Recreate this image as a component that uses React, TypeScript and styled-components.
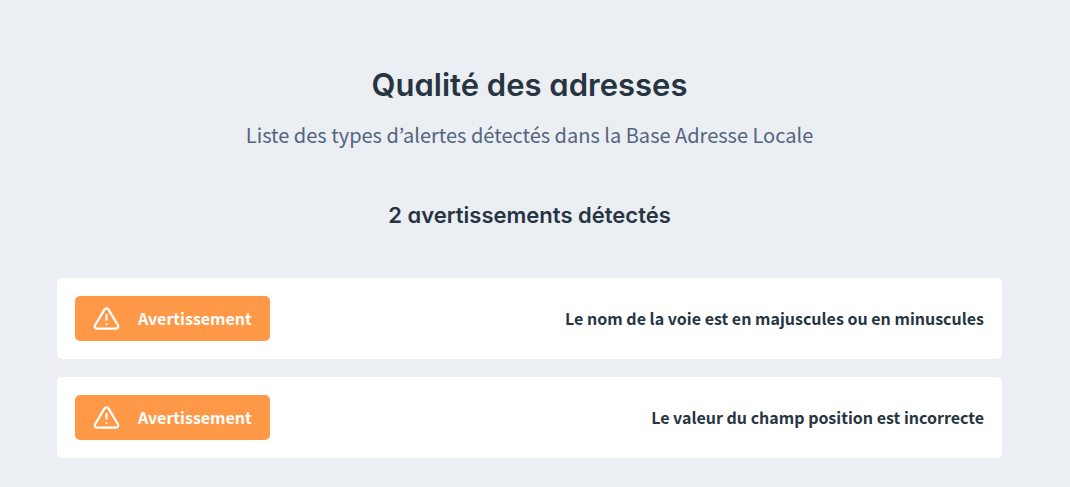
import React from 'react';
import styled, { createGlobalStyle } from 'styled-components';
import { FiAlertTriangle } from 'react-icons/fi';

const GlobalStyle = createGlobalStyle`
  *, *::before, *::after { box-sizing: border-box; }
  body {
    margin: 0;
    background: #ebeef3;
    color: #26353f;
    font-family: "Noto Sans CJK KR", "Noto Sans", sans-serif;
  }
`;

const Section = styled.main`
  padding: 64px 68px 28px 57px;
`;

const Header = styled.header`
  display: flex;
  flex-direction: column;
  align-items: center;
  text-align: center;
`;

const Title = styled.h1`
  margin: 0;
  font-family: Inter, sans-serif;
  font-feature-settings: "cv11";
  font-size: 31px;
  line-height: 42px;
  font-weight: 600;
`;

const Subtitle = styled.p`
  margin: 12px 0 0;
  color: #53657d;
  font-size: 20px;
  line-height: 34px;
`;

const Count = styled.h2`
  margin: 48px 0 0;
  font-family: Inter, sans-serif;
  font-feature-settings: "cv11";
  font-size: 22px;
  line-height: 30px;
  font-weight: 600;
`;

const AlertList = styled.ul`
  display: flex;
  flex-direction: column;
  gap: 18px;
  margin: 48px 0 0;
  padding: 0;
  list-style: none;
`;

const AlertCard = styled.li`
  display: flex;
  align-items: center;
  justify-content: space-between;
  padding: 18px;
  border-radius: 5px;
  background: #fff;
  font-size: 16px;
  line-height: 27px;
  font-weight: 700;
`;

const Badge = styled.span`
  display: flex;
  align-items: center;
  gap: 18px;
  padding: 9px 18px;
  border-radius: 5px;
  background: #ff9947;
  color: #fff;
`;

const alerts = [
  'Le nom de la voie est en majuscules ou en minuscules',
  'Le valeur du champ position est incorrecte',
];

export default function App() {
  return (
    <>
      <GlobalStyle />
      <Section>
        <Header>
          <Title>Qualité des adresses</Title>
          <Subtitle>Liste des types d’alertes détectés dans la Base Adresse Locale</Subtitle>
          <Count>{alerts.length} avertissements détectés</Count>
        </Header>
        <AlertList>
          {alerts.map((message) => (
            <AlertCard key={message}>
              <Badge>
                <FiAlertTriangle size={27} aria-hidden="true" />
                <span>Avertissement</span>
              </Badge>
              <span>{message}</span>
            </AlertCard>
          ))}
        </AlertList>
      </Section>
    </>
  );
}
